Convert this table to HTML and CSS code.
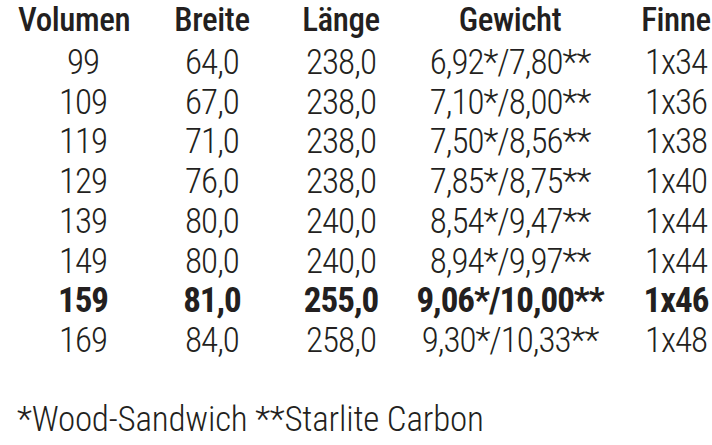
FILE: index.html
```html
<!DOCTYPE html>
<html lang="de">
<head>
<meta charset="utf-8">
<title>Technische Daten</title>
<link rel="stylesheet" href="styles.css">
</head>
<body>
<main class="sheet">
  <table class="specs">
    <colgroup>
      <col class="col-vol">
      <col class="col-breite">
      <col class="col-laenge">
      <col class="col-gewicht">
      <col class="col-finne">
    </colgroup>
    <thead>
      <tr class="head-row">
        <th class="c1 head-first">Volumen</th>
        <th>Breite</th>
        <th>Länge</th>
        <th class="c4">Gewicht</th>
        <th>Finne</th>
      </tr>
    </thead>
    <tbody>
      <tr class="first-row"><td>99</td><td>64,0</td><td>238,0</td><td class="c4">6,92*/7,80**</td><td>1x34</td></tr>
      <tr><td>109</td><td>67,0</td><td>238,0</td><td class="c4">7,10*/8,00**</td><td>1x36</td></tr>
      <tr><td>119</td><td>71,0</td><td>238,0</td><td class="c4">7,50*/8,56**</td><td>1x38</td></tr>
      <tr><td>129</td><td>76,0</td><td>238,0</td><td class="c4">7,85*/8,75**</td><td>1x40</td></tr>
      <tr><td>139</td><td>80,0</td><td>240,0</td><td class="c4">8,54*/9,47**</td><td>1x44</td></tr>
      <tr><td>149</td><td>80,0</td><td>240,0</td><td class="c4">8,94*/9,97**</td><td>1x44</td></tr>
      <tr class="highlight"><td>159</td><td>81,0</td><td>255,0</td><td class="c4">9,06*/10,00**</td><td>1x46</td></tr>
      <tr><td>169</td><td>84,0</td><td>258,0</td><td class="c4">9,30*/10,33**</td><td>1x48</td></tr>
    </tbody>
  </table>
  <p class="legend">*Wood-Sandwich **Starlite Carbon</p>
</main>
</body>
</html>
```
FILE: styles.css
```css
html, body {
  margin: 0;
  padding: 0;
  background: #ffffff;
}

body {
  width: 712px;
  height: 445px;
  overflow: hidden;
  color: #231f20;
  font-family: "Roboto Condensed", "Liberation Sans Narrow", sans-serif;
}

.sheet {
  padding-left: 18px;
}

.specs {
  border-collapse: collapse;
  border-spacing: 0;
  table-layout: fixed;
  width: 694px;
}

.col-vol { width: 130px; }
.col-breite { width: 128px; }
.col-laenge { width: 130px; }
.col-gewicht { width: 234px; }
.col-finne { width: 72px; }

.specs th,
.specs td {
  padding: 0;
  text-align: center;
  white-space: nowrap;
}

.specs th {
  font-size: 33px;
  font-weight: 500;
  line-height: 39px;
  height: 39px;
  letter-spacing: -0.4px;
}

.specs th.head-first {
  text-align: left;
}

.specs td {
  font-size: 35px;
  font-weight: 300;
  line-height: 39.7px;
  height: 39.7px;
  letter-spacing: -1px;
}

.specs .c4 {
  padding-right: 26px;
}

.first-row td {
  padding-top: 4px;
}

.highlight td {
  font-weight: 700;
}

.legend {
  margin: 39px 0 0 -1px;
  font-size: 35px;
  font-weight: 300;
  line-height: 40px;
  letter-spacing: -0.2px;
  white-space: nowrap;
}
```
